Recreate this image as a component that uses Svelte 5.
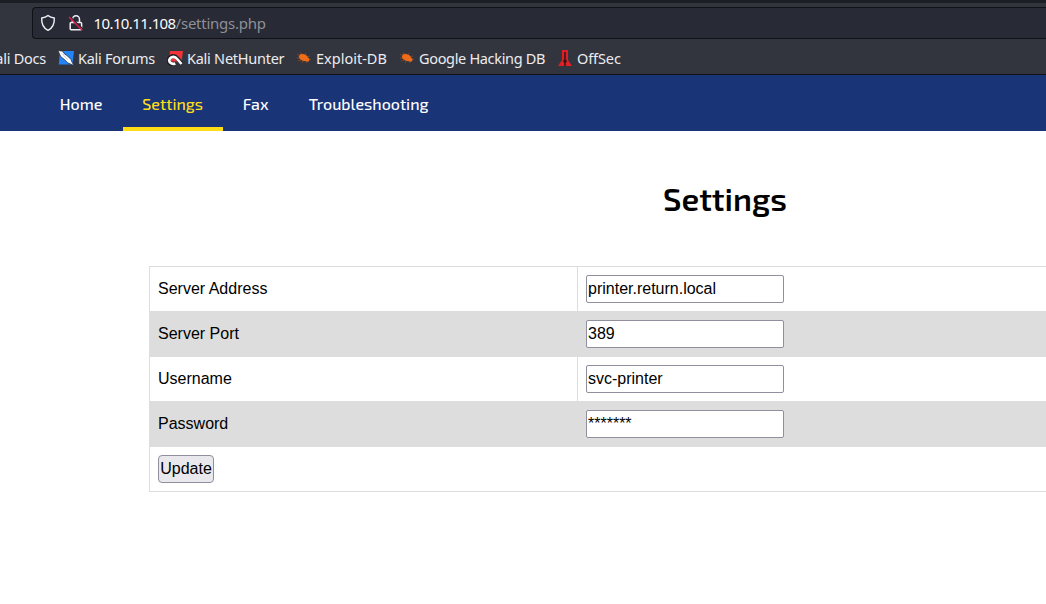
<script>
  const tabs = [
    { label: 'Home', width: 83 },
    { label: 'Settings', width: 100, active: true },
    { label: 'Fax', width: 66 },
    { label: 'Troubleshooting', width: 160 }
  ];
  const bookmarks = [
    { label: 'Kali Forums', icon: 'forums', width: 109, spacing: -0.28 },
    { label: 'Kali NetHunter', icon: 'hunter', width: 129, spacing: -0.25 },
    { label: 'Exploit-DB', icon: 'bug', width: 103, spacing: 0 },
    { label: 'Google Hacking DB', icon: 'bug', width: 158, spacing: -0.33 },
    { label: 'OffSec', icon: 'offsec', width: 70, spacing: -0.1 }
  ];
  const fields = [
    { label: 'Server Address', value: 'printer.return.local' },
    { label: 'Server Port', value: '389' },
    { label: 'Username', value: 'svc-printer' },
    { label: 'Password', value: '*******' }
  ];
</script>

<div class="window">
  <header class="chrome">
    <div class="urlbar">
      <svg class="shield" width="16" height="18" viewBox="0 0 16 18"><path d="M8 1.5C6.2 3 4 3.7 1.7 4c-.3 5.7 1.5 10 6.3 12.4 4.8-2.4 6.6-6.7 6.3-12.4C12 3.700 9.800 3 8 1.500Z" fill="none" stroke="#f2f2f5" stroke-width="1.400" stroke-linejoin="round" /></svg>
      <svg class="lock" width="16" height="18" viewBox="0 0 16 18">
        <path d="M4.500 8V5.200a3.500 3.500 0 0 1 7 0V8M3.200 8.500h9.400q1 0 1 1v5.300q0 1-1 1H3.200q-1 0-1-1V9.500q0-1 1-1Z" fill="none" stroke="#f0f0f3" stroke-width="1.500" />
        <path d="M2.500 3 15 15.300" stroke="#282a35" stroke-width="1.500" />
        <path d="M1 3 14.200 16.200" stroke="#e21f4b" stroke-width="1.400" />
      </svg>
      <span class="url"><b>10.10.11.108</b>/settings.php</span>
    </div>
    <div class="bookmarks">
      <span class="docs">Kali Docs</span>
      {#each bookmarks as mark}
        <span class="bookmark" style:width="{mark.width}px">
          <svg width="16" height="16" viewBox="0 0 16 16">
            {#if mark.icon === 'forums'}
              <path d="M2 1h14l-1.500 13.500H.800Z" fill="#2384f5" />
              <path d="M0 .5 3 1l1.500 0 1.500 2.500L9.500 6l3.500 3.500 1 2.700 2 3.300-3.500-1.500-2.800-1.200-3.200-3.300L3 7 1.500 4Z" fill="#fff" stroke="#23252b" stroke-width=".7" />
              <path d="m4 3.500 5.500 6" stroke="#a0a4ac" stroke-width=".6" />
            {:else if mark.icon === 'hunter'}
              <path d="M3 1h13l-1.500 10.500H2Z" fill="#f03338" />
              <path d="M7.800 14C3.500 15.300 0 11.500 2.200 8.200 4.200 5.300 8 5.300 10.300 8.200L15 14" fill="none" stroke="#202127" stroke-width="4.200" />
              <path d="M8.300 13.500C4.500 15 1 11.800 2.800 8.800 4.500 6.200 8 6.200 10.200 9L14.500 14" fill="none" stroke="#fff" stroke-width="2.600" />
            {:else if mark.icon === 'bug'}
              <ellipse cx="7.500" cy="7.500" rx="4.800" ry="3.200" transform="rotate(24 7.500 7.500)" fill="#ef6c19" />
              <path d="M4 6 1 4M4 8H.8M5 10l-3 1M6 5 4.500 2.500M9 5l1-2M11 7l3-1M12 9l3 .5M10 11l1 2M7 11l-1 2" stroke="#a9501f" stroke-width=".6" />
              <circle cx="11.500" cy="9.700" r="2" fill="#ef6c19" />
            {:else}
              <path d="M5 0h6v10l4 6H1l4-6Z" fill="#df2025" />
              <path d="M7.400 2h1.200v7.500l1.200 1.500-1.200 2v3H7.400v-3l-1.200-2 1.200-1.500Z" fill="#21191e" stroke="#40151a" stroke-width=".4" />
            {/if}
          </svg>
          <span style:letter-spacing="{mark.spacing}px">{mark.label}</span>
        </span>
      {/each}
    </div>
  </header>
  <nav>
    {#each tabs as tab}
      <a class:active={tab.active} href="#top" style:width="{tab.width}px">{tab.label}</a>
    {/each}
  </nav>
  <main>
    <h1>Settings</h1>
    <form class="settings">
      {#each fields as field}
        <div class="row">
          <label for={field.label}>{field.label}</label>
          <div class="cell"><input id={field.label} type="text" value={field.value} /></div>
        </div>
      {/each}
      <div class="row last"><div class="action"><button type="button">Update</button></div></div>
    </form>
  </main>
</div>

<style>
  :global(body) { background: #fff; overflow: hidden; }
  .window { width: 1046px; height: 604px; overflow: hidden; background: #fff; color: #000; font: 16px "Liberation Sans", Arial, sans-serif; }
  .chrome { box-sizing: border-box; height: 75px; padding-top: 4px; background: #33353e; border-top: 3px solid #1c1e25; border-bottom: 1px solid #111216; font-family: "Noto Sans", sans-serif; }
  .urlbar { box-sizing: border-box; height: 32px; margin-left: 32px; padding-left: 7px; display: flex; align-items: center; background: #282a35; border: 1px solid #101116; border-right: 0; border-radius: 4px 0 0 4px; }
  .lock { margin-left: 12px; }
  .url { margin-left: 9.500px; color: #8e9097; font-size: 15px; letter-spacing: -0.24px; white-space: nowrap; }
  .url b { font-weight: 400; color: #fbfbfe; letter-spacing: -0.6px; }
  .bookmarks { height: 35px; padding-top: 2px; box-sizing: border-box; display: flex; align-items: center; color: #ececf0; font-size: 14.500px; white-space: nowrap; }
  .docs { width: 58px; display: flex; justify-content: flex-end; box-sizing: border-box; padding-right: 12px; flex: none; letter-spacing: -0.25px; }
  .bookmark { flex: none; display: flex; align-items: center; gap: 4px; }
  .bookmark svg { flex: none; margin-top: 1px; }
  nav { height: 56px; padding-left: 40px; box-sizing: border-box; display: flex; background: #1a3478; font-family: "Exo 2", "Open Sans", sans-serif; }
  nav a { box-sizing: border-box; flex: none; display: flex; align-items: center; padding: 4px 19.800px 0; border-bottom: 4px solid transparent; color: #fff; text-decoration: none; font-size: 16px; font-weight: 500; white-space: nowrap; }
  nav a.active { padding-left: 19.300px; color: #ffde17; border-color: #ffde17; }
  main { width: 1450px; }
  h1 { margin: 0; padding-top: 44px; height: 135px; box-sizing: border-box; text-align: center; font: 600 32px/46px "Exo 2", "Open Sans", sans-serif; }
  .settings { width: 1152px; margin: 0 auto; box-sizing: border-box; border: 1px solid #ddd; border-top: 0; }
  .row { display: grid; grid-template-columns: 428px 1fr; height: 45px; box-sizing: border-box; border-top: 1px solid #ddd; }
  .row:nth-child(even) { background: #ddd; }
  .row.last { display: block; }
  label { padding-left: 8px; border-right: 1px solid #ddd; line-height: 44px; }
  .cell, .action { padding: 8px; }
  input, button { box-sizing: border-box; display: block; height: 28px; border: 1px solid #8f8f9d; color: #000; font: 16px "Liberation Sans", Arial, sans-serif; }
  input { width: 198px; padding: 1px; border-radius: 2px; background: #fff; }
  button { width: 56px; padding: 0; border-radius: 4px; background: #e9e9ed; }
</style>
